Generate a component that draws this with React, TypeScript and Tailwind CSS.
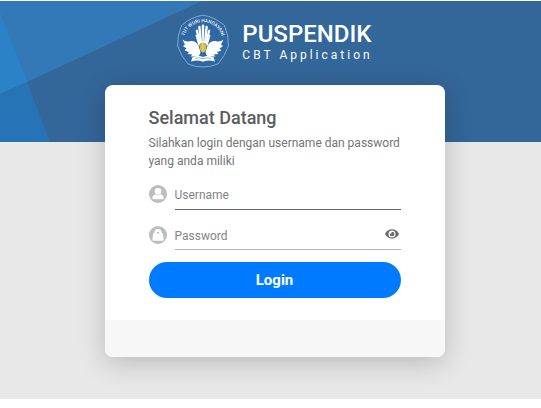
import { useState } from "react";
import { FaEye, FaEyeSlash } from "react-icons/fa";

function Emblem() {
  return (
    <svg
      viewBox="0 0 54 54"
      className="w-[54px] h-[54px] shrink-0 overflow-visible"
      role="img"
      aria-label="Tut Wuri Handayani"
    >
      <defs>
        <path id="motto" d="M8.5 21.5 A19.5 19.5 0 0 1 45.5 21.5" />
      </defs>
      <path
        d="M27 1.2 Q39 3 48.5 11.5 Q53 22 52.4 32 Q49 42 42 50 Q34.5 53 27 53 Q19.5 53 12 50 Q5 42 1.6 32 Q1 22 5.5 11.5 Q15 3 27 1.2Z"
        fill="#2f68a3"
        stroke="#a9c4de"
        strokeWidth="0.7"
      />
      <text
        fill="#e8f1f8"
        fontSize="4.8"
        fontWeight="500"
        fontFamily="Roboto, sans-serif"
        textAnchor="middle"
      >
        <textPath href="#motto" startOffset="50%">
          TUT WURI HANDAYANI
        </textPath>
      </text>
      {/* wings */}
      <path
        fill="#ffffff"
        d="M6.5 25.5 Q10 28.5 14.5 27 Q20 26.5 22.5 32 L24.5 38 Q24 42 21 42.5 L14.5 42.5 L16.5 40.5 L11.5 40 L13 38 L8.5 36.5 L10.5 34.5 L7 32 L9 30.5Z"
      />
      <path
        fill="#ffffff"
        d="M47.5 25.5 Q44 28.5 39.5 27 Q34 26.5 31.5 32 L29.5 38 Q30 42 33 42.5 L39.5 42.5 L37.5 40.5 L42.5 40 L41 38 L45.5 36.5 L43.5 34.5 L47 32 L45 30.5Z"
      />
      {/* tail feathers */}
      <g stroke="#ffffff" strokeLinecap="round" fill="none">
        <path strokeWidth="2.6" d="M27 11.8 V28" />
        <path strokeWidth="2.4" d="M23.4 13 L25 28 M30.6 13 L29 28" />
        <path strokeWidth="2.2" d="M20.8 16.5 L23.8 29 M33.2 16.5 L30.2 29" />
        <path strokeWidth="1.6" d="M20.4 21.5 L23 31 M33.6 21.5 L31 31" />
      </g>
      <path d="M25.2 13 L26 27 M28.8 13 L28 27" stroke="#2f68a3" strokeWidth="0.4" />
      <ellipse cx="27" cy="33.5" rx="3.3" ry="5" fill="#d9bd3c" />
      <path d="M27 29 V38" stroke="#f3e8a4" strokeWidth="0.7" />
      {/* book */}
      <path
        fill="#ffffff"
        d="M16.5 43.2 Q22.5 41 27 43 Q31.5 41 37.5 43.2 L39 47.5 Q32.5 45.5 27 47.7 Q21.5 45.5 15 47.5Z"
      />
      <path d="M19 44.5 Q23.5 43 27 44.8 Q30.5 43 35 44.5" stroke="#2f68a3" strokeWidth="0.5" fill="none" />
    </svg>
  );
}

function UserBadge() {
  return (
    <svg viewBox="0 0 18 18" className="w-[18px] h-[18px] shrink-0" aria-hidden="true">
      <circle cx="9" cy="9" r="9" fill="#bdbdbd" />
      <circle cx="9" cy="6.2" r="3.3" fill="#ffffff" />
      <path d="M3.3 13 Q3.6 9.9 6.8 9.3 Q9 10.8 11.2 9.3 Q14.4 9.9 14.7 13 Q14.7 14.2 13.6 14.2 H4.4 Q3.3 14.2 3.3 13Z" fill="#ffffff" />
    </svg>
  );
}

function LockBadge() {
  return (
    <svg viewBox="0 0 18 18" className="w-[18px] h-[18px] shrink-0" aria-hidden="true">
      <circle cx="9" cy="9" r="9" fill="#bdbdbd" />
      <path d="M3.4 13.4 L4 8 Q4.2 7 5.2 7 Q5.6 3 9 3 Q12.4 3 12.8 7 Q13.8 7 14 8 L14.6 13.4 Q14.6 14.8 13.4 14.8 H4.6 Q3.4 14.8 3.4 13.4Z" fill="#ffffff" />
      <circle cx="9" cy="6.8" r="1.1" fill="#bdbdbd" />
    </svg>
  );
}

export default function App() {
  const [visible, setVisible] = useState(false);

  return (
    <div className="pt-px font-['Roboto',sans-serif]">
      <div className="bg-[#e8e8e8] pb-[42px]">
        <header className="relative h-[141px] overflow-hidden bg-[#336699]">
          <svg className="absolute top-0 left-0 w-[210px] h-[141px]" viewBox="0 0 210 141" aria-hidden="true">
            <path d="M0 0 H202 L27 81 L0 93Z" fill="#3379b7" />
            <path d="M0 11 L27 81 L0 93Z" fill="#2b82c7" />
            <path d="M0 93 L27 81 L50 141 H0Z" fill="#2674b5" />
          </svg>
          <div className="relative flex items-start justify-center gap-3 pt-[13px] pl-2">
            <Emblem />
            <div className="pt-2 text-white">
              <h1 className="text-2xl leading-6 font-medium">PUSPENDIK</h1>
              <p className="text-xs leading-[18px] tracking-[3px]">CBT Application</p>
            </div>
          </div>
        </header>

        <div className="relative -mt-[57px] pl-2">
          <main className="mx-auto w-full max-w-[340px] rounded-lg bg-white overflow-hidden shadow-[0_6px_28px_rgba(0,0,0,0.2)]">
            <form className="px-11 pt-[21px] pb-[22px]" onSubmit={(e) => e.preventDefault()}>
              <h2 className="text-lg leading-6 font-medium text-[#5c5c5c]">Selamat Datang</h2>
              <p className="mt-1 text-xs leading-[18px] text-[#757575]">
                Silahkan login dengan username dan password yang anda miliki
              </p>

              <div className="mt-[11px] flex items-start gap-2">
                <label htmlFor="username" className="pt-1" aria-label="Username">
                  <UserBadge />
                </label>
                <input
                  id="username"
                  type="text"
                  placeholder="Username"
                  className="min-w-0 flex-1 h-[29px] border-b border-[#666666] bg-transparent text-xs text-[#555555] placeholder:text-[#858585] outline-none"
                />
              </div>

              <div className="mt-3 flex items-start gap-2">
                <label htmlFor="password" className="pt-1" aria-label="Password">
                  <LockBadge />
                </label>
                <div className="min-w-0 flex-1 h-[28px] flex items-center border-b border-[#b5b5b5]">
                  <input
                    id="password"
                    type={visible ? "text" : "password"}
                    placeholder="Password"
                    className="min-w-0 flex-1 bg-transparent text-xs text-[#555555] placeholder:text-[#858585] outline-none"
                  />
                  <button
                    type="button"
                    aria-label="Toggle password"
                    className="px-0.5 pb-1 text-[#6b6b6b] cursor-pointer"
                    onClick={() => setVisible(!visible)}
                  >
                    {visible ? <FaEyeSlash size={14} /> : <FaEye size={14} />}
                  </button>
                </div>
              </div>

              <button
                type="submit"
                className="mt-3 w-full h-9 rounded-full bg-[#007bff] text-[15px] font-bold text-white cursor-pointer"
              >
                Login
              </button>
            </form>
            <div className="h-[37px] bg-[#f7f7f7]" />
          </main>
        </div>
      </div>
    </div>
  );
}
